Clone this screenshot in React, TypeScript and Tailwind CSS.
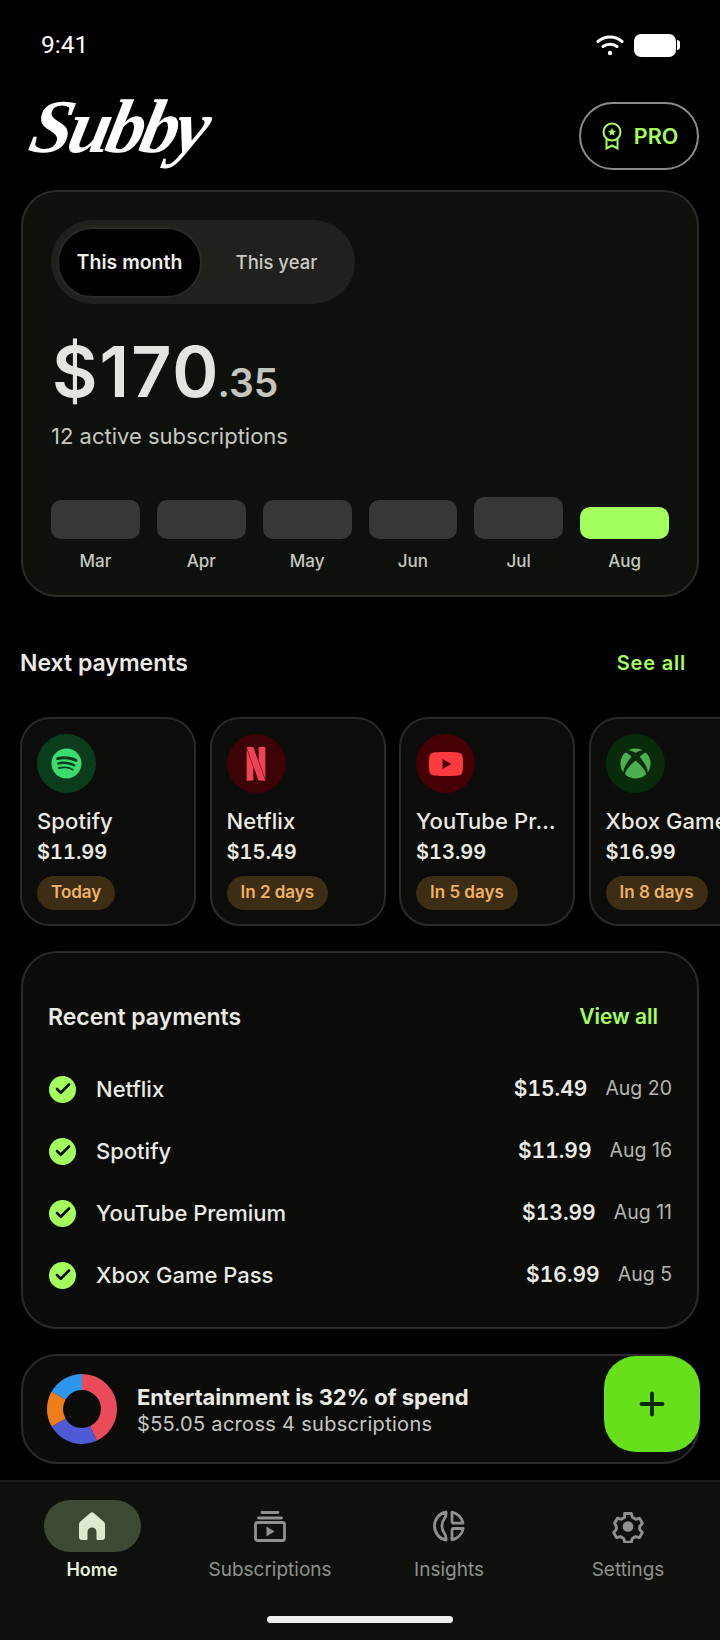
import React from "react";
import { FaSpotify, FaXbox, FaYoutube } from "react-icons/fa";
import { SiNetflix } from "react-icons/si";
import { Check, Plus } from "lucide-react";

const bars = [
  { label: "Mar", height: "h-[39px]" },
  { label: "Apr", height: "h-[39px]" },
  { label: "May", height: "h-[39px]" },
  { label: "Jun", height: "h-[39px]" },
  { label: "Jul", height: "h-[42px]" },
  { label: "Aug", height: "h-[32px]", active: true },
];

const nextPayments = [
  { name: "Spotify", price: "$11.99", due: "Today", circle: "bg-[#0b3c1c]", icon: <FaSpotify className="text-[#3ddc70]" size={31} /> },
  { name: "Netflix", price: "$15.49", due: "In 2 days", circle: "bg-[#3c0205]", icon: <SiNetflix className="text-[#ee4357]" size={34} /> },
  { name: "YouTube Pr…", price: "$13.99", due: "In 5 days", circle: "bg-[#450003]", icon: <FaYoutube className="text-[#ff3b40]" size={36} /> },
  { name: "Xbox Game Pass", price: "$16.99", due: "In 8 days", circle: "bg-[#082b0a]", icon: <FaXbox className="text-[#4caf50]" size={31} /> },
];

const recent = [
  { name: "Netflix", price: "$15.49", date: "Aug 20" },
  { name: "Spotify", price: "$11.99", date: "Aug 16" },
  { name: "YouTube Premium", price: "$13.99", date: "Aug 11" },
  { name: "Xbox Game Pass", price: "$16.99", date: "Aug 5" },
];

function Wifi() {
  return (
    <svg width="28" height="22" viewBox="0 0 28 22" fill="none" stroke="#fff" strokeWidth="3" strokeLinecap="round">
      <path d="M2 7.500C9 1.500 19 1.500 26 7.500" />
      <path d="M7 12.500C11 9.500 17 9.500 21 12.500" />
      <circle cx="14" cy="19" r="2.200" fill="#fff" stroke="none" />
    </svg>
  );
}

function Medal() {
  return (
    <svg width="20" height="28" viewBox="0 0 20 28" fill="none" stroke="#a3ff5c" strokeWidth="2">
      <circle cx="10" cy="10" r="8.500" />
      <path d="M4.500 17v9.500l5.500-3 5.500 3V17" />
      <path d="M10 6l1.200 2.600 2.800.3-2.100 1.900.6 2.800-2.500-1.400-2.500 1.400.6-2.800L6 8.900l2.800-.3z" fill="#a3ff5c" stroke="none" />
    </svg>
  );
}

function Donut() {
  const segments = [
    { color: "#ea4a5a", dash: 155, offset: 0 },
    { color: "#4f5bd5", dash: 85, offset: -155 },
    { color: "#f07d1a", dash: 60, offset: -240 },
    { color: "#2f96ee", dash: 60, offset: -300 },
  ];
  return (
    <svg width="70" height="70" viewBox="0 0 70 70" className="-rotate-90 shrink-0">
      {segments.map((s) => (
        <circle key={s.color} cx="35" cy="35" r="27" fill="none" stroke={s.color} strokeWidth="16" pathLength={360} strokeDasharray={`${s.dash} ${360 - s.dash}`} strokeDashoffset={s.offset} />
      ))}
    </svg>
  );
}

function HomeIcon() {
  return (
    <svg width="26" height="28" viewBox="0 0 26 28" fill="#dcebd0">
      <path fillRule="evenodd" d="M11 1.200a3 3 0 0 1 4 0l9.600 8.200A4 4 0 0 1 26 12.400V25a3 3 0 0 1-3 3h-4.500a1 1 0 0 1-1-1v-7a4.500 4.500 0 0 0-9 0v7a1 1 0 0 1-1 1H3a3 3 0 0 1-3-3V12.400a4 4 0 0 1 1.400-3z" />
    </svg>
  );
}

function SubsIcon() {
  return (
    <svg width="32" height="31" viewBox="0 0 32 31" fill="none" stroke="#8f918c" strokeWidth="2.800">
      <path d="M8 1.500h16M4.500 7h23" strokeLinecap="round" />
      <rect x="1.500" y="11.500" width="29" height="18" rx="2" />
      <path d="M12.500 15.500l8 5-8 5z" fill="#8f918c" stroke="none" />
    </svg>
  );
}

function InsightsIcon() {
  return (
    <svg width="32" height="32" viewBox="0 0 32 32" fill="none" stroke="#8f918c" strokeWidth="2.800" strokeLinejoin="round">
      <path d="M13 2C6.500 3 1.500 9 1.500 16S6.500 29 13 30c.4-3-.3-5-1.800-7-3-3.500-3-10.500 0-14C12.700 7 13.400 5 13 2z" />
      <path d="M19 2.200c5.500 1 10 5.500 11 11H21c-1.200 0-2-.8-2-2z" />
      <path d="M21 18.500h9.200c-1 5.500-5.500 10-11.200 11.300v-9.300c0-1.200.8-2 2-2z" />
    </svg>
  );
}

function SettingsIcon() {
  return (
    <svg width="32" height="33" viewBox="0 0 30 31" fill="none" stroke="#8f918c" strokeWidth="3" strokeLinejoin="round">
      <path d="M11.500 2h7l1 4 3.500 2 4-1.200 3 5.400-2.800 3.300v3l2.800 3.300-3 5.400-4-1.200-3.500 2-1 4h-7l-1-4-3.500-2-4 1.200-3-5.400 2.800-3.300v-3L1 12.200l3-5.400L8 8l3.500-2z" transform="translate(1.500 1.500) scale(.9)" />
      <circle cx="15" cy="15.500" r="5" fill="#8f918c" stroke="none" />
    </svg>
  );
}

const navItems = [
  { label: "Subscriptions", icon: <SubsIcon /> },
  { label: "Insights", icon: <InsightsIcon /> },
  { label: "Settings", icon: <SettingsIcon /> },
];

export default function App() {
  return (
    <div className="relative h-[1640px] w-[720px] overflow-hidden bg-black font-['Inter',sans-serif] text-[#e9eae4]">
      <div className="flex h-[88px] items-center justify-between pt-[2px] pl-[41px] pr-[40px]">
        <span className="font-['Roboto',sans-serif] text-[24.500px] text-white">9:41</span>
        <div className="flex items-center gap-[10px]">
          <Wifi />
          <div className="flex items-center gap-[1px]">
            <div className="h-[23px] w-[42px] rounded-[7px] bg-white" />
            <div className="h-[10px] w-[3px] rounded-r-sm bg-white" />
          </div>
        </div>
      </div>

      <div className="flex h-[102px] items-start justify-between pl-[32px] pr-[21px]">
        <span className="-mt-[3px] -skew-x-12 font-['Liberation_Serif',serif] text-[76px] leading-[82px] font-bold tracking-[-4px] text-white italic">Subby</span>
        <div className="mt-[14px] flex h-[68px] w-[120px] items-center justify-center gap-[12px] rounded-[34px] border-2 border-[#8b8b88] pl-[2px] text-[21.500px] font-semibold text-[#a3ff5c]">
          <Medal />
          PRO
        </div>
      </div>

      <div className="mx-[21px] h-[407px] rounded-[36px] border-2 border-[#2a2b28] bg-[#0e100c] pt-[28px] pl-[28px] pr-[28px]">
        <div className="flex h-[84px] w-[304px] items-center rounded-[42px] bg-[#20211d] pl-[6px]">
          <div className="flex h-[71px] w-[145px] items-center justify-center rounded-[36px] border-2 border-[#2a2b28] bg-black pt-[2px] text-[19.500px] font-semibold text-[#eeeee9]">This month</div>
          <div className="flex-1 pt-[2px] pl-[1px] pr-[5px] text-center text-[18.500px] font-medium text-[#c9cac4]">This year</div>
        </div>
        <div className="mt-[26px] flex items-baseline pl-[1px] leading-[84px] font-semibold">
          <span className="text-[70px] tracking-[2px] text-[#e4e5df]">$170</span>
          <span className="-ml-[3px] text-[39px] text-[#c4c5be]">.35</span>
        </div>
        <div className="-mt-[3px] text-[22px] leading-[28px] text-[#c6c7c1]">12 active subscriptions</div>
        <div className="mt-[47px] grid h-[42px] grid-cols-6 items-end gap-[17px]">
          {bars.map((b) => (
            <div key={b.label} className={`${b.height} rounded-[10px] ${b.active ? "bg-[#a3ff5c]" : "bg-[#363834]"}`} />
          ))}
        </div>
        <div className="mt-[11px] grid grid-cols-6 gap-[17px] text-center text-[17px] leading-[22px] font-medium text-[#c6c7c1]">
          {bars.map((b) => (
            <span key={b.label}>{b.label}</span>
          ))}
        </div>
      </div>

      <div className="mt-[51px] flex items-center justify-between pl-[20px] pr-[34px] leading-[30px]">
        <span className="text-[23px] font-semibold">Next payments</span>
        <span className="text-[20px] font-semibold tracking-[0.8px] text-[#a3ff5c]">See all</span>
      </div>

      <div className="mt-[39px] flex gap-[13.500px] overflow-hidden pl-[20px]">
        {nextPayments.map((p) => (
          <div key={p.name} className="h-[209px] w-[176px] shrink-0 rounded-[30px] border-2 border-[#2a2b28] bg-[#0c0c0b] pt-[15px] pl-[15px]">
            <div className={`flex h-[59px] w-[59px] items-center justify-center rounded-full ${p.circle}`}>{p.icon}</div>
            <div className="mt-[14px] text-[22px] leading-[29px] font-medium tracking-[0.1px] whitespace-nowrap">{p.name}</div>
            <div className="mt-[1px] text-[20px] leading-[30px] font-semibold tabular-nums">{p.price}</div>
            <div className="mt-[9px] inline-flex h-[34px] items-center rounded-full bg-[#3c2d14] px-[14px] text-[17px] font-semibold text-[#efb264]">{p.due}</div>
          </div>
        ))}
      </div>

      <div className="mx-[21px] mt-[25px] h-[378px] rounded-[36px] border-2 border-[#2a2b28] bg-[#0b0c0a] pt-[49px] pl-[25px] pr-[25px]">
        <div className="flex items-center justify-between pr-[14px] leading-[30px]">
          <span className="text-[23px] font-semibold">Recent payments</span>
          <span className="text-[21px] font-semibold text-[#a3ff5c]">View all</span>
        </div>
        <div className="mt-[26px] flex flex-col">
          {recent.map((r) => (
            <div key={r.name} className="flex h-[62px] items-center">
              <div className="ml-[1px] flex h-[27px] w-[27px] items-center justify-center rounded-full bg-[#a3ff5c]">
                <Check size={18} strokeWidth={3.500} className="text-[#0b0c0a]" />
              </div>
              <span className="ml-[20px] text-[22px] font-medium">{r.name}</span>
              <span className="ml-auto text-[21px] font-semibold tabular-nums">{r.price}</span>
              <span className="ml-[18px] text-[19.500px] text-[#b4b5af]">{r.date}</span>
            </div>
          ))}
        </div>
      </div>

      <div className="mx-[21px] mt-[25px] flex h-[110px] items-center gap-[20px] rounded-[36px] border-2 border-[#2a2b28] bg-[#0b0c0a] pl-[24px]">
        <Donut />
        <div>
          <div className="text-[22px] leading-[30px] font-bold">Entertainment is 32% of spend</div>
          <div className="text-[20px] leading-[24px] tracking-[0.3px] text-[#c6c7c1]">$55.05 across 4 subscriptions</div>
        </div>
      </div>

      <button className="absolute top-[1356px] left-[604px] flex h-[96px] w-[96px] items-center justify-center rounded-[32px] bg-[#66e01a]">
        <Plus size={36} strokeWidth={2.600} className="text-[#0f2a04]" />
      </button>

      <div className="absolute inset-x-0 bottom-0 h-[160px] border-t-2 border-[#1c1d1a] bg-[#0e100c]">
        <div className="grid grid-cols-[184px_172px_186px_172px] pt-[18px]">
          <div className="flex flex-col items-center">
            <div className="flex h-[52px] w-[97px] items-center justify-center rounded-[26px] bg-[#3c4a34]">
              <HomeIcon />
            </div>
            <span className="mt-[5px] text-[18px] leading-[26px] font-semibold text-[#e6f3dc]">Home</span>
          </div>
          {navItems.map((n) => (
            <div key={n.label} className="flex flex-col items-center">
              <div className="flex h-[52px] items-center justify-center">{n.icon}</div>
              <span className="mt-[5px] text-[19px] leading-[26px] text-[#8f918c]">{n.label}</span>
            </div>
          ))}
        </div>
        <div className="absolute bottom-[17px] left-[267px] h-[7px] w-[186px] rounded-full bg-[#eeeeea]" />
      </div>
    </div>
  );
}
